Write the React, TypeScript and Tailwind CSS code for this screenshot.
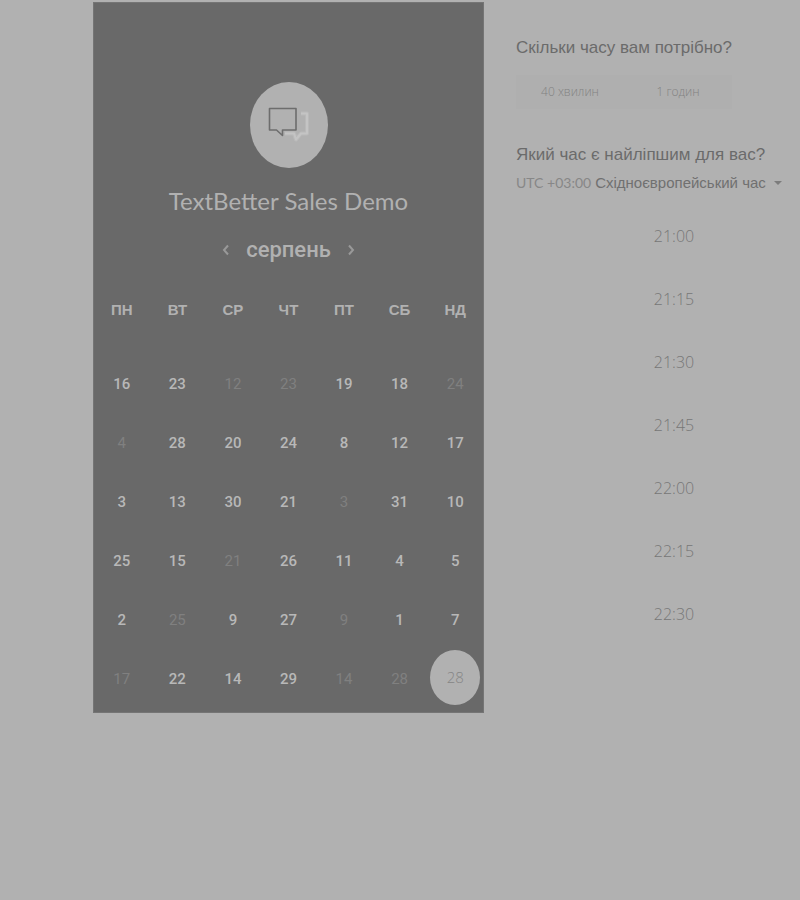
const weekdays = ['ПН', 'ВТ', 'СР', 'ЧТ', 'ПТ', 'СБ', 'НД'];

type Day = { n: number; off?: boolean; selected?: boolean };
const on = (n: number): Day => ({ n });
const off = (n: number): Day => ({ n, off: true });

const weeks: Day[][] = [
  [on(16), on(23), off(12), off(23), on(19), on(18), off(24)],
  [off(4), on(28), on(20), on(24), on(8), on(12), on(17)],
  [on(3), on(13), on(30), on(21), off(3), on(31), on(10)],
  [on(25), on(15), off(21), on(26), on(11), on(4), on(5)],
  [on(2), off(25), on(9), on(27), off(9), on(1), on(7)],
  [off(17), on(22), on(14), on(29), off(14), off(28), { n: 28, selected: true }],
];

const slots = ['21:00', '21:15', '21:30', '21:45', '22:00', '22:15', '22:30'];

function Logo() {
  return (
    <div className="flex h-[86px] w-[78px] items-center justify-center rounded-[50%] bg-[#b1b1b1]">
      <svg width="44" height="40" viewBox="0 0 44 40" fill="none" aria-hidden="true">
        <path d="M34 8.500h6v20h-6l-5 6-2-6h-9" stroke="#b9b9b9" strokeWidth="4" strokeLinejoin="round" />
        <path d="M34 8.500h6v20h-6l-5 6-2-6h-9" stroke="#c4c4c4" strokeWidth="2" strokeLinejoin="round" />
        <path d="M2.500 3.500h26.500v21.500h-13.500v5.500l-6-5.500h-7z" fill="#b1b1b1" stroke="#6d6d6d" strokeWidth="1.600" strokeLinejoin="round" />
      </svg>
    </div>
  );
}

function Arrow({ d, label }: { d: string; label: string }) {
  return (
    <button type="button" aria-label={label} className="flex h-6 w-4 items-center justify-center text-[#999999]">
      <svg width="8" height="12" viewBox="0 0 8 12" fill="none" stroke="currentColor" strokeWidth="2" aria-hidden="true">
        <path d={d} />
      </svg>
    </button>
  );
}

function DayCell({ day }: { day: Day }) {
  if (day.selected) {
    return (
      <button
        type="button"
        aria-pressed="true"
        className="mx-auto flex h-[55px] w-[50px] items-center justify-center rounded-[50%] bg-[#b1b1b1] font-['Open_Sans',sans-serif] text-[15px] font-light text-[#858585]"
      >
        {day.n}
      </button>
    );
  }
  return (
    <button type="button" disabled={day.off} className={day.off ? 'h-full w-full text-[#808080]' : 'h-full w-full font-medium text-[#b8b8b8]'}>
      {day.n}
    </button>
  );
}

function Calendar() {
  return (
    <section className="mt-0.5 ml-[93px] flex w-[391px] shrink-0 flex-col items-center border border-[#757575] bg-[#696969] pt-[79px] pb-[3px] text-[#b1b1b1]">
      <Logo />
      <h1 className="mt-[15px] font-[Lato,sans-serif] text-2xl leading-9">TextBetter Sales Demo</h1>
      <div className="mt-[15px] flex items-center gap-3">
        <Arrow d="M6 1.500 2 6l4 4.500" label="Попередній місяць" />
        <h2 className="font-[Roboto,sans-serif] text-[22px] leading-8 font-medium">серпень</h2>
        <Arrow d="m2 1.500 4 4.500-4 4.500" label="Наступний місяць" />
      </div>
      <table className="mt-6 w-full table-fixed border-collapse">
        <thead>
          <tr className="h-[65px] align-top">
            {weekdays.map((d) => (
              <th key={d} scope="col" className="p-0 pt-1 font-['Liberation_Sans',Arial,sans-serif] text-[15px] leading-8 font-bold">
                {d}
              </th>
            ))}
          </tr>
        </thead>
        <tbody className="font-[Roboto,sans-serif] text-[15px]">
          {weeks.map((week, i) => (
            <tr key={i} className="h-[59px]">
              {week.map((day, j) => (
                <td key={j} className={day.selected ? 'h-[59px] p-0 align-top' : 'h-[59px] p-0 text-center'}>
                  <DayCell day={day} />
                </td>
              ))}
            </tr>
          ))}
        </tbody>
      </table>
    </section>
  );
}

function Times() {
  return (
    <section className="min-w-0 flex-1 pt-[34px] pl-8 font-['Liberation_Sans',Arial,sans-serif] text-[#6b6b6b]">
      <h2 className="text-[17px] leading-7">Скільки часу вам потрібно?</h2>
      <div className="mt-[13px] grid h-[34px] w-[216px] grid-cols-2 bg-[#afafaf] font-['Open_Sans',sans-serif] text-xs font-light text-[#828282]">
        <button type="button">40 хвилин</button>
        <button type="button">1 годин</button>
      </div>
      <h2 className="mt-8 text-[17px] leading-7 whitespace-nowrap">Який час є найліпшим для вас?</h2>
      <div className="flex h-7 items-center gap-1 whitespace-nowrap">
        <label htmlFor="zone" className="font-[Lato,sans-serif] text-sm text-[#878787]">
          UTC +03:00
        </label>
        <select id="zone" className="appearance-none bg-transparent p-0 text-[15px] text-[#707070]">
          <option>Східноєвропейський час</option>
        </select>
        <svg width="8" height="5" viewBox="0 0 8 5" className="ml-1 shrink-0" aria-hidden="true">
          <path d="M0 0h8L4 4z" fill="#7c7c7c" />
        </svg>
      </div>
      <div className="mt-[13px] -mr-6 ml-2 flex flex-col gap-3 font-['Open_Sans',sans-serif] text-base font-light text-[#777777]">
        {slots.map((t) => (
          <button key={t} type="button" className="h-[51px]">
            {t}
          </button>
        ))}
      </div>
    </section>
  );
}

export default function App() {
  return (
    <main className="min-h-screen overflow-x-hidden bg-[#b1b1b1]">
      <div className="flex items-start">
        <Calendar />
        <Times />
      </div>
    </main>
  );
}
